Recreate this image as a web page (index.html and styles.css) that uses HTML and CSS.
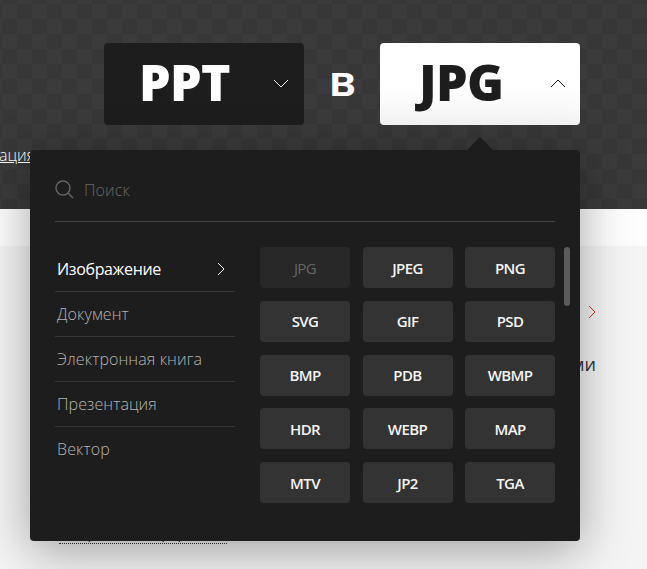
FILE: index.html
```html
<!DOCTYPE html>
<html lang="ru">
  <head>
    <meta charset="UTF-8" />
    <meta name="viewport" content="width=device-width, initial-scale=1.0" />
    <title>PPT в JPG</title>
    <link rel="stylesheet" href="styles.css">
  </head>
  <body>
    <header class="hero">
      <div class="converter">
        <button type="button" class="select select-from">
          <span class="select-name">PPT</span>
          <svg class="chevron" width="16" height="9" viewBox="0 0 16 9"><path d="M1 1l7 7 7-7" /></svg>
        </button>
        <span class="separator">в</span>
        <button type="button" class="select select-to">
          <span class="select-name">JPG</span>
          <svg class="chevron" width="16" height="9" viewBox="0 0 16 9"><path d="M1 8l7-7 7 7" /></svg>
        </button>
      </div>
      <a class="hero-link" href="#">ация</a>
    </header>
    <div class="strip"></div>
    <main class="content">
      <svg class="more" width="9" height="14" viewBox="0 0 9 14"><path d="M1 1l6 6-6 6" /></svg>
      <p class="content-text">ми</p>
      <span class="content-link">Подробнее о форматах</span>
    </main>

    <div class="dropdown">
      <div class="search">
        <svg class="search-icon" width="20" height="20" viewBox="0 0 20 20">
          <circle cx="8" cy="8" r="7" />
          <path d="M13 13l5 5" />
        </svg>
        <input class="search-input" type="text" placeholder="Поиск" />
      </div>
      <div class="dropdown-body">
        <ul class="categories">
          <li class="category active">
            Изображение
            <svg class="category-arrow" width="9" height="14" viewBox="0 0 9 14"><path d="M1 1l6 6-6 6" /></svg>
          </li>
          <li class="category">Документ</li>
          <li class="category">Электронная книга</li>
          <li class="category">Презентация</li>
          <li class="category">Вектор</li>
        </ul>
        <div class="formats">
          <button type="button" class="format" disabled>JPG</button>
          <button type="button" class="format">JPEG</button>
          <button type="button" class="format">PNG</button>
          <button type="button" class="format">SVG</button>
          <button type="button" class="format">GIF</button>
          <button type="button" class="format">PSD</button>
          <button type="button" class="format">BMP</button>
          <button type="button" class="format">PDB</button>
          <button type="button" class="format">WBMP</button>
          <button type="button" class="format">HDR</button>
          <button type="button" class="format">WEBP</button>
          <button type="button" class="format">MAP</button>
          <button type="button" class="format">MTV</button>
          <button type="button" class="format">JP2</button>
          <button type="button" class="format">TGA</button>
        </div>
        <div class="scrollbar"></div>
      </div>
    </div>
  </body>
</html>
```
FILE: styles.css
```css
* {
  box-sizing: border-box;
}
body {
  margin: 0;
  height: 569px;
  position: relative;
  overflow: hidden;
  font-family: "Open Sans", sans-serif;
  background-color: #f4f4f4;
}
button {
  border: none;
  padding: 0;
  font-family: inherit;
  cursor: pointer;
}
svg {
  fill: none;
  stroke: currentColor;
}
.hero {
  height: 209px;
  padding-top: 43px;
  background-color: #3b3b3b;
  background-image: conic-gradient(#373737 25%, #3b3b3b 0 50%, #373737 0 75%, #3b3b3b 0);
  background-size: 30px 30px;
  background-position: 2px 4px;
}
.converter {
  display: flex;
  align-items: center;
  height: 82px;
  margin-left: 104px;
}
.select {
  display: flex;
  align-items: center;
  justify-content: space-between;
  width: 200px;
  height: 82px;
  padding: 0 15px 0 35px;
  border-radius: 4px;
}
.select-from {
  background-color: #1d1d1d;
  color: #fff;
}
.select-to {
  padding: 0 14px 0 39px;
  background: linear-gradient(#fff 50%, #f5f5f5);
  color: #1d1d1d;
}
.select-name {
  padding-bottom: 4px;
  font-size: 50px;
  line-height: 76px;
  font-weight: 800;
  letter-spacing: -0.6px;
}
.chevron {
  margin-bottom: 2px;
}
.separator {
  width: 76px;
  padding: 0 0 6px 1px;
  text-align: center;
  color: #fff;
  font-family: "Liberation Sans", sans-serif;
  font-size: 43px;
  line-height: 74px;
  font-weight: 700;
}
.hero-link {
  display: block;
  margin: 19px 0 0 -1px;
  color: #fff;
  font-size: 16px;
  line-height: 22px;
  font-weight: 300;
}
.strip {
  height: 37px;
  background-color: #fdfdfd;
}
.content {
  display: flex;
  flex-direction: column;
  align-items: flex-end;
  padding: 59px 50px 0 59px;
}
.more {
  color: #e2302f;
}
.content-text {
  margin: 31px 1px 0 0;
  color: #333;
  font-size: 18px;
  line-height: 28px;
}
.content-link {
  align-self: flex-start;
  width: 168px;
  margin-top: 143px;
  white-space: nowrap;
  border-bottom: 1px dotted #333;
  color: #333;
  font-size: 15px;
  line-height: 22px;
}

.dropdown {
  position: absolute;
  top: 150px;
  left: 30px;
  width: 550px;
  height: 391px;
  padding: 15px 10px 0 25px;
  border-radius: 4px;
  background-color: #1d1d1d;
  box-shadow: 0 10px 50px rgba(0, 0, 0, 0.35);
}
.dropdown::before {
  content: "";
  position: absolute;
  top: -13px;
  left: 437px;
  border: solid transparent;
  border-width: 0 13px 13px;
  border-bottom-color: #1d1d1d;
}
.search {
  display: flex;
  align-items: center;
  width: 500px;
  height: 57px;
  padding-bottom: 7px;
  border-bottom: 1px solid #444;
}
.search-icon {
  color: #666;
  stroke-width: 1.4;
}
.search-input {
  width: 400px;
  margin-left: 9px;
  padding: 0;
  border: none;
  background: none;
  color: #fff;
  font-family: inherit;
  font-size: 16px;
  font-weight: 300;
  letter-spacing: 0.15px;
}
.search-input::placeholder {
  color: #666;
}
.dropdown-body {
  display: flex;
  margin-top: 25px;
}
.categories {
  width: 180px;
  margin: 0;
  padding: 0;
  list-style: none;
}
.category {
  display: flex;
  align-items: center;
  justify-content: space-between;
  height: 45px;
  padding: 0 9px 0 2px;
  border-bottom: 1px solid #373737;
  color: #b4b4b4;
  font-size: 16px;
  font-weight: 300;
  letter-spacing: 0.1px;
}
.category:last-child {
  height: 44px;
  border-bottom: none;
}
.category.active {
  color: #fff;
  font-weight: 400;
  letter-spacing: -0.35px;
}
.formats {
  display: grid;
  grid-template-columns: 90px 90px 90px;
  grid-auto-rows: 41px;
  gap: 12.75px 12.5px;
  margin-left: 25px;
}
.format {
  border-radius: 4px;
  background-color: #333;
  color: #f4f4f4;
  font-size: 15px;
  font-weight: 600;
  letter-spacing: -0.6px;
}
.format:disabled {
  background-color: #282828;
  color: #666;
  font-weight: 400;
}
.scrollbar {
  width: 6px;
  height: 59px;
  margin-left: 9px;
  border-radius: 3px;
  background-color: #5b5b5b;
}
```
